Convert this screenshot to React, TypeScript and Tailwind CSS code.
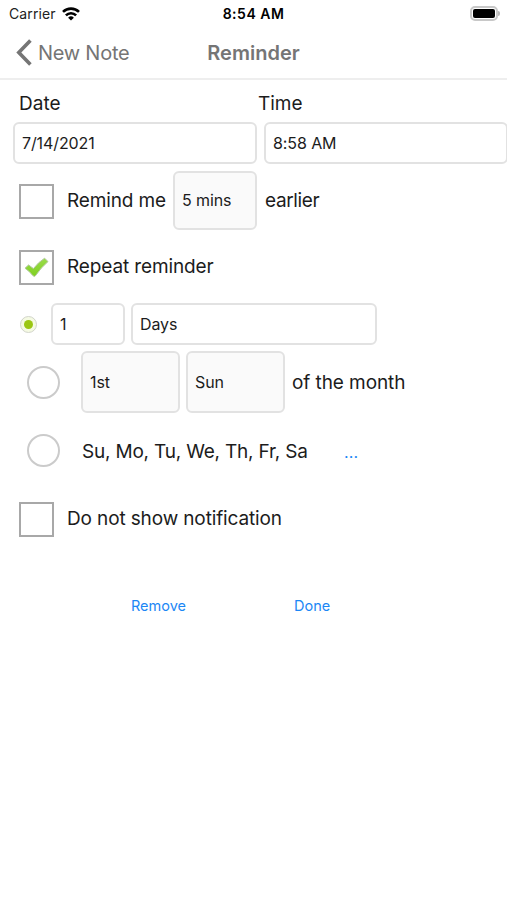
import { useState } from "react";

type FieldProps = {
  value: string;
  className: string;
};

const Field = ({ value, className }: FieldProps) => {
  return (
    <div
      className={`flex shrink-0 items-center rounded-[6px] border-2 border-[#e2e2e2] pl-[7px] text-[16px] tracking-[-0.1px] text-[#1c1c1c] ${className}`}
    >
      {value}
    </div>
  );
};

type ToggleProps = {
  checked: boolean;
  onClick: () => void;
};

const Checkbox = ({ checked, onClick }: ToggleProps) => {
  return (
    <button
      className="flex h-[35px] w-[35px] shrink-0 items-center justify-center border-2 border-[#a8a8a8] bg-white"
      onClick={onClick}
    >
      {checked && (
        <svg width="25" height="21" viewBox="0 0 25 21" className="shrink-0">
          <defs>
            <linearGradient id="tick" x1="0" y1="0" x2="0" y2="1">
              <stop offset="0" stopColor="#9bdc4c" />
              <stop offset="1" stopColor="#7fd01f" />
            </linearGradient>
          </defs>
          <path
            d="M1 11.2 L4.6 7.9 L9.4 11.6 Q14.5 5 20.6 1.2 L24 4.6 Q17 10.5 11.6 18.6 Q10.3 20.2 8.8 18.6 Q5.5 14.2 1 11.2 Z"
            fill="url(#tick)"
            stroke="#b3c9a0"
            strokeWidth="1"
            strokeLinejoin="round"
          />
        </svg>
      )}
    </button>
  );
};

const Radio = ({ checked, onClick }: ToggleProps) => {
  if (checked) {
    return (
      <button
        className="flex h-[17px] w-[17px] shrink-0 items-center justify-center rounded-full border border-[#d2d5cb] bg-[#f5fae3]"
        onClick={onClick}
      >
        <span className="h-[9px] w-[9px] rounded-full bg-[#9bc613]" />
      </button>
    );
  }
  return (
    <button
      className="h-[33px] w-[33px] shrink-0 rounded-full border-2 border-[#cbcbcb] bg-white"
      onClick={onClick}
    />
  );
};

const StatusBar = () => {
  return (
    <div className="grid h-[27px] grid-cols-3 items-center text-[14px]">
      <div className="flex items-center gap-[6px] pl-[9px] text-[#222]">
        <span className="tracking-[0.1px]">Carrier</span>
        <svg width="18" height="14" viewBox="0 0 18 14" fill="none" stroke="#000" strokeWidth="2.6">
          <path d="M1 4.9 A11.3 11.3 0 0 1 17 4.9" />
          <path d="M3.9 8.4 A7.2 7.2 0 0 1 14.1 8.4" />
          <path d="M9 13.6 L6.1 10.7 A4.1 4.1 0 0 1 11.9 10.7 Z" fill="#000" stroke="none" />
        </svg>
      </div>
      <span className="text-center font-semibold tracking-[0.5px] text-black">8:54 AM</span>
      <div className="flex items-center justify-end pr-[7px]">
        <div className="h-[15px] w-[28px] rounded-[5px] border-2 border-[#c8c8c8] p-px">
          <div className="h-full rounded-[2px] bg-black" />
        </div>
        <div className="h-[5px] w-[2px] rounded-r-full bg-[#b8b8b8]" />
      </div>
    </div>
  );
};

const App = () => {
  const [early, setEarly] = useState(false);
  const [repeat, setRepeat] = useState(true);
  const [silent, setSilent] = useState(false);
  const [mode, setMode] = useState("interval");

  return (
    <div className="flex h-[900px] w-[507px] flex-col overflow-hidden bg-white font-['Inter',sans-serif] text-[19px] tracking-[-0.13px] text-[#1c1c1c]">
      <StatusBar />

      <div className="grid h-[53px] grid-cols-3 items-center border-b-2 border-[#eee] text-[20px] text-[#757575]">
        <button className="flex items-center gap-[6px] pl-[16px] tracking-[-0.25px] whitespace-nowrap">
          <svg width="16" height="27" viewBox="0 0 16 27" fill="none" stroke="#757575" strokeWidth="3.6">
            <path d="M14.4 1.5 L2.8 13.5 L14.4 25.5" />
          </svg>
          New Note
        </button>
        <h1 className="text-center font-semibold tracking-normal">Reminder</h1>
      </div>

      <div className="flex h-[42px] items-center pt-[6px] tracking-normal">
        <span className="w-[258px] pl-[19px]">Date</span>
        <span>Time</span>
      </div>
      <div className="flex gap-[7px] pl-[13px]">
        <Field value="7/14/2021" className="h-[42px] w-[244px]" />
        <Field value="8:58 AM" className="h-[42px] w-[244px]" />
      </div>

      <div className="mt-[7px] flex h-[59px] items-center pl-[19px]">
        <div className="pt-[2px]">
          <Checkbox checked={early} onClick={() => setEarly(!early)} />
        </div>
        <span className="w-[106px] pt-[2px] pl-[13px] whitespace-nowrap">Remind me</span>
        <Field value="5 mins" className="ml-[13px] h-[59px] w-[84px] bg-[#fafafa] pb-[2px]" />
        <span className="pt-[2px] pl-[8px] tracking-[-0.35px]">earlier</span>
      </div>

      <div className="mt-[20px] flex h-[35px] items-center gap-[13px] pl-[19px]">
        <Checkbox checked={repeat} onClick={() => setRepeat(!repeat)} />
        <span>Repeat reminder</span>
      </div>

      <div className="mt-[18px] flex h-[42px] items-center pl-[20px]">
        <Radio checked={mode === "interval"} onClick={() => setMode("interval")} />
        <Field value="1" className="ml-[14px] h-[42px] w-[74px]" />
        <Field value="Days" className="ml-[6px] h-[42px] w-[246px]" />
      </div>

      <div className="mt-[6px] flex h-[62px] items-center pl-[27px]">
        <Radio checked={mode === "month"} onClick={() => setMode("month")} />
        <Field value="1st" className="ml-[21px] h-[62px] w-[99px] bg-[#fafafa]" />
        <Field value="Sun" className="ml-[6px] h-[62px] w-[99px] bg-[#fafafa]" />
        <span className="pt-[2px] pl-[7px] tracking-[-0.08px]">of the month</span>
      </div>

      <div className="mt-[21px] flex h-[33px] items-center pl-[27px]">
        <Radio checked={mode === "week"} onClick={() => setMode("week")} />
        <span className="w-[284px] pt-[3px] pl-[22px] tracking-[-0.2px]">Su, Mo, Tu, We, Th, Fr, Sa</span>
        <button className="pt-[2px] text-[16px] tracking-[0.2px] text-[#1c87f5]">...</button>
      </div>

      <div className="mt-[35px] flex h-[35px] items-center gap-[13px] pl-[19px]">
        <Checkbox checked={silent} onClick={() => setSilent(!silent)} />
        <span>Do not show notification</span>
      </div>

      <div className="mt-[58px] flex text-[14.5px] leading-[22px] tracking-normal text-[#1c87f5]">
        <button className="ml-[131px] w-[163px] text-left">Remove</button>
        <button>Done</button>
      </div>
    </div>
  );
};

export default App;
